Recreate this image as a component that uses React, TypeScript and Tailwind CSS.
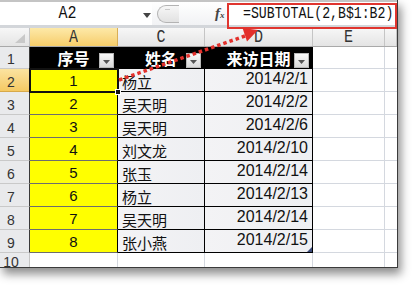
import React from "react";

const data: [number, string, string][] = [
  [1, "杨立", "2014/2/1"],
  [2, "吴天明", "2014/2/2"],
  [3, "吴天明", "2014/2/6"],
  [4, "刘文龙", "2014/2/10"],
  [5, "张玉", "2014/2/14"],
  [6, "杨立", "2014/2/13"],
  [7, "吴天明", "2014/2/14"],
  [8, "张小燕", "2014/2/15"],
];

function DropBtn() {
  return (
    <div className="absolute right-[3px] top-[6px] w-[15px] h-[15px] border border-[#b9b9b9] bg-gradient-to-b from-[#fafafa] to-[#d9d9d9] flex items-center justify-center">
      <svg width="7" height="4" viewBox="0 0 7 4" className="mt-[3px]">
        <polygon points="0,0 7,0 3.5,4" fill="#555" />
      </svg>
    </div>
  );
}

function RowHead({ n, sel, h }: { n: number; sel?: boolean; h: string }) {
  return (
    <div
      className={`${h} w-[30px] shrink-0 flex items-end justify-center pr-[7px] pb-[2px] border-r border-b ${
        sel
          ? "bg-gradient-to-b from-[#fbe3a0] to-[#f5c962] border-r-[#3a3a3a] border-b-[#d7a94a]"
          : "bg-[#e9eaec] border-r-[#3a3a3a] border-b-[#c9c9c9]"
      } text-[#333] text-[14px] leading-none font-['Liberation_Sans']`}
    >
      {n}
    </div>
  );
}

export default function App() {
  return (
    <div className="w-[420px] h-[289px] bg-white relative overflow-hidden font-['Liberation_Sans',sans-serif]">
      <div className="relative w-[398px] h-[268px] border-r border-b border-[#3b3b3b] shadow-[3px_6px_9px_rgba(0,0,0,0.45)] bg-white overflow-hidden flex flex-col">
        {/* formula bar */}
        <div className="h-[28px] shrink-0 flex bg-white border-t-2 border-t-[#c4c4c4] border-b-[3px] border-b-[#d3d6da]">
          <div className="w-[152px] relative flex items-center">
            <div className="w-[135px] flex justify-center">
              <span className="inline-block font-['Liberation_Mono'] text-[15px] text-[#111] leading-none scale-y-125">A2</span>
            </div>
            <svg width="8" height="5" viewBox="0 0 8 5" className="absolute left-[143px] top-[11px]">
              <polygon points="0,0 8,0 4,5" fill="#444" />
            </svg>
          </div>
          <div className="w-[76px] flex items-center relative bg-gradient-to-b from-[#ffffff] to-[#f1f2f4]">
            <div className="ml-[5px] w-[22px] h-[18px] rounded-l-full border border-r-0 border-[#b3b3b3] bg-gradient-to-b from-[#f7f7f7] to-[#e2e2e2] relative">
              <div className="absolute left-[7px] top-[3px] w-[5px] h-px bg-[#c9c9c9]" />
            </div>
            <span className="ml-[36px] font-['Liberation_Serif'] italic font-bold text-[15px] text-[#444] leading-none">
              f<span className="text-[9px]">x</span>
            </span>
          </div>
          <div className="flex-1 flex items-center pl-[15px]">
            <span className="inline-block font-['Liberation_Mono'] text-[13.2px] text-[#111] leading-none scale-y-125 whitespace-nowrap">
              =SUBTOTAL(2,B$1:B2)
            </span>
          </div>
        </div>

        {/* column headers */}
        <div className="h-[19px] shrink-0 flex border-b border-[#a9a9a9]">
          <div className="w-[30px] shrink-0 relative bg-gradient-to-b from-[#f7f7f7] to-[#e4e4e4] border-r border-[#c5c5c5]">
            <svg width="10" height="9" viewBox="0 0 10 9" className="absolute left-[15px] top-[6px]">
              <polygon points="10,0 10,9 0,9" fill="#c8c8c8" />
            </svg>
          </div>
          {[
            ["A", "w-[88px]", true],
            ["C", "w-[87px]", false],
            ["D", "w-[108px]", false],
            ["E", "w-[72px]", false],
            ["", "w-[12px]", false],
          ].map(([l, w, sel], i) => (
            <div
              key={i}
              className={`${w} shrink-0 flex items-center justify-center border-r ${
                sel
                  ? "bg-gradient-to-b from-[#fde9a8] to-[#f6cd69] border-[#d9ae55]"
                  : "bg-gradient-to-b from-[#f7f7f7] to-[#e4e4e4] border-[#c5c5c5]"
              }`}
            >
              <span className="inline-block font-['Liberation_Mono'] text-[15px] text-[#333] leading-none scale-y-125">{l as string}</span>
            </div>
          ))}
        </div>

        {/* row 1 header */}
        <div className="h-[22px] shrink-0 flex">
          <RowHead n={1} h="h-[22px]" />
          <div className="w-[88px] shrink-0 relative bg-black border-r border-b border-black flex items-center justify-center text-white font-bold text-[16px] font-['Noto_Sans_CJK_SC',sans-serif] leading-none">
            序号
            <DropBtn />
          </div>
          <div className="w-[87px] shrink-0 relative bg-black border-r border-b border-black flex items-center justify-center text-white font-bold text-[16px] font-['Noto_Sans_CJK_SC',sans-serif] leading-none">
            姓名
            <DropBtn />
          </div>
          <div className="w-[108px] shrink-0 relative bg-black border-r border-b border-black flex items-center justify-center text-white font-bold text-[16px] font-['Noto_Sans_CJK_SC',sans-serif] leading-none">
            来访日期
            <DropBtn />
          </div>
          <div className="w-[72px] shrink-0 bg-white border-r border-b border-[#d4d8df]" />
          <div className="w-[12px] shrink-0 bg-white border-b border-[#d4d8df]" />
        </div>

        {data.map(([n, name, date], i) => (
          <div key={i} className="h-[23px] shrink-0 flex">
            <RowHead n={i + 2} sel={i === 0} h="h-[23px]" />
            <div className="w-[88px] shrink-0 bg-[#ffff00] border-r border-b border-r-black border-b-[#6e6e6e] flex items-end justify-center pb-[3px] text-[15px] leading-none text-[#111]">
              {n}
            </div>
            <div className="w-[87px] shrink-0 bg-gradient-to-r from-[#f3f3f5] to-[#eeeff2] border-r border-b border-black flex items-end pl-[4px] pb-[2px] text-[15px] leading-none text-[#111] font-['Noto_Sans_CJK_SC',sans-serif]">
              {name}
            </div>
            <div className="w-[108px] shrink-0 relative bg-gradient-to-r from-[#f3f3f5] to-[#eeeff2] border-r border-b border-black flex items-end justify-end pr-[4px] pb-[4px] text-[16px] leading-none text-[#111]">
              {date}
              {i === 7 && (
                <svg width="5" height="5" viewBox="0 0 5 5" className="absolute right-0 bottom-0">
                  <polygon points="5,0 5,5 0,5" fill="#3b4a7a" />
                </svg>
              )}
            </div>
            <div className="w-[72px] shrink-0 bg-white border-r border-b border-[#d4d8df]" />
            <div className="w-[12px] shrink-0 bg-white border-b border-[#d4d8df]" />
          </div>
        ))}

        {/* row 10 */}
        <div className="h-[14px] shrink-0 flex">
          <div className="w-[30px] shrink-0 bg-[#e9eaec] border-r border-[#c5c5c5] flex items-start justify-center pr-[7px] pt-[2px] text-[#333] text-[14px] leading-none">
            10
          </div>
          <div className="w-[88px] shrink-0 border-r border-[#d4d8df]" />
          <div className="w-[87px] shrink-0 border-r border-[#d4d8df]" />
          <div className="w-[108px] shrink-0 border-r border-[#d4d8df]" />
          <div className="w-[72px] shrink-0 border-r border-[#d4d8df]" />
        </div>

        {/* selection on A2 */}
        <div className="absolute left-[29px] top-[68px] w-[90px] h-[25px] border-2 border-[#111] pointer-events-none" />
        <div className="absolute left-[115px] top-[89px] w-[6px] h-[6px] bg-[#111] border border-white pointer-events-none" />

        {/* red highlight box */}
        <div className="absolute left-[227px] top-[3px] w-[170px] h-[26px] border-2 border-[#e0352f] pointer-events-none" />

        {/* dotted arrow */}
        <svg className="absolute left-0 top-0 pointer-events-none" width="398" height="268" viewBox="0 0 398 268">
          <line x1="119" y1="80" x2="245" y2="36" stroke="#e3302b" strokeWidth="3.5" strokeDasharray="3.5 3" />
          <polygon points="258,30 247,41.5 242.5,28" fill="#e3302b" />
        </svg>
      </div>
    </div>
  );
}
